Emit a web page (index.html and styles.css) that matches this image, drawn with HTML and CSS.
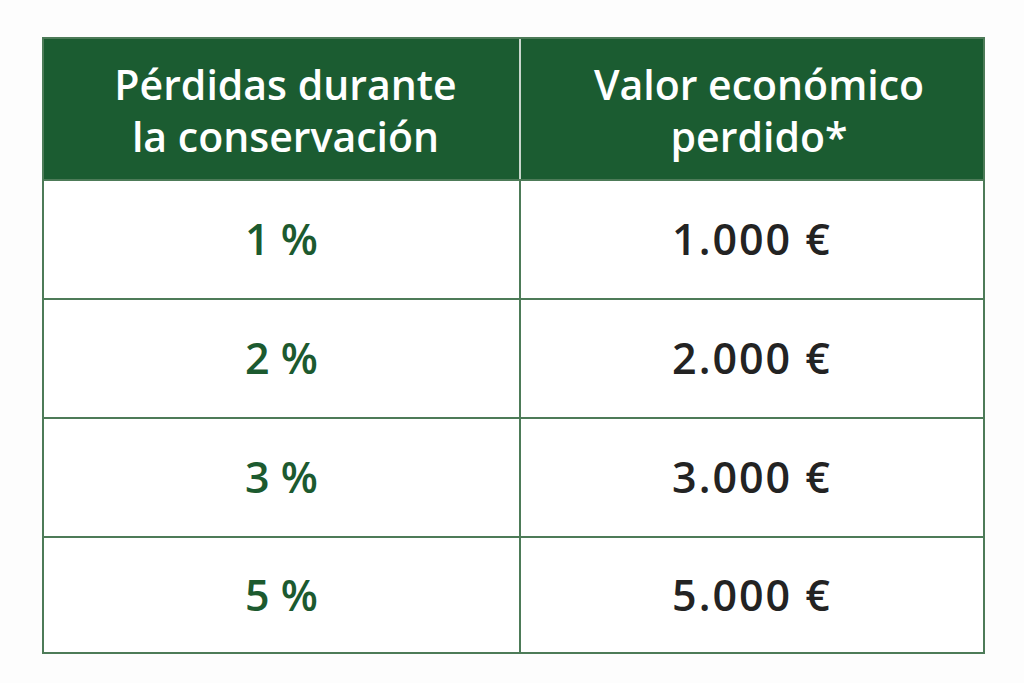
FILE: index.html
```html
<!DOCTYPE html>
<html lang="es">
<head>
<meta charset="utf-8">
<title>Pérdidas durante la conservación</title>
<link rel="stylesheet" href="styles.css">
</head>
<body>
<div class="page">
  <div class="table">
    <div class="head">
      <div class="hcell h1">Pérdidas durante<br>la conservación</div>
      <div class="hcell h2">Valor económico<br>perdido*</div>
    </div>
    <div class="row"><div class="cell pct">1 %</div><div class="cell val">1.000 €</div></div>
    <div class="row"><div class="cell pct">2 %</div><div class="cell val">2.000 €</div></div>
    <div class="row"><div class="cell pct">3 %</div><div class="cell val">3.000 €</div></div>
    <div class="row last"><div class="cell pct">5 %</div><div class="cell val">5.000 €</div></div>
  </div>
</div>
</body>
</html>
```
FILE: styles.css
```css
html, body {
  margin: 0;
  padding: 0;
  background: #fdfdfd;
}
.page {
  padding: 37px 0 0 42px;
}
.table {
  width: 943px;
  box-sizing: border-box;
  border: 2px solid #4d7b58;
  background: #ffffff;
  font-family: "Open Sans", "Noto Sans", sans-serif;
  font-weight: 600;
}
.head {
  display: grid;
  grid-template-columns: 477px 1fr;
  height: 142px;
  background: #1b5c31;
  border-bottom: 2px solid #4d7b58;
  box-sizing: border-box;
}
.hcell {
  display: flex;
  align-items: center;
  justify-content: center;
  text-align: center;
  color: #ffffff;
  font-size: 41px;
  line-height: 52px;
  padding-top: 1px;
}
.hcell.h1 {
  border-right: 2px solid #c9d6cc;
  padding-left: 8px;
}
.hcell.h2 {
  padding-left: 14px;
}
.row {
  display: grid;
  grid-template-columns: 477px 1fr;
  height: 119px;
  border-bottom: 2px solid #4d7b58;
  box-sizing: border-box;
}
.row.last {
  border-bottom: none;
  height: 114px;
}
.cell {
  display: flex;
  align-items: center;
  justify-content: center;
  font-size: 43px;
  padding-bottom: 2px;
}
.cell.pct {
  color: #1c5a2f;
  border-right: 2px solid #4d7b58;
}
.cell.val {
  color: #232323;
  letter-spacing: 2px;
}
```
